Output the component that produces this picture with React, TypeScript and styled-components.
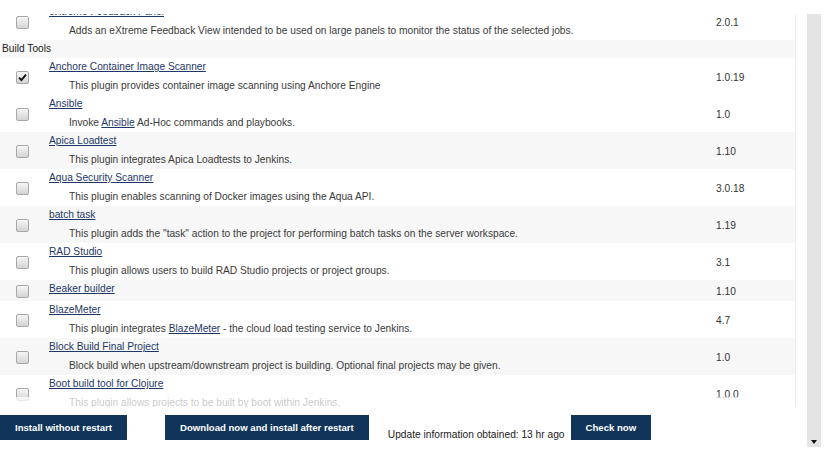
import React, { useLayoutEffect, useRef } from "react";
import styled, { createGlobalStyle } from "styled-components";

const GlobalStyle = createGlobalStyle`
  html, body {
    margin: 0;
    padding: 0;
    background: #ffffff;
    font-family: "Liberation Sans", Arial, sans-serif;
    font-size: 10.2px;
    color: #333333;
  }
`;

type Plugin = {
  name: string;
  version: string;
  desc?: React.ReactNode;
  checked?: boolean;
  shade?: boolean;
};

const Frame = styled.div`
  display: grid;
  grid-template-columns: 807px 14px;
  margin-top: 14px;
  height: 433px;
`;

const Main = styled.div`
  display: flex;
  flex-direction: column;
  min-width: 0;
`;

const Viewport = styled.div`
  position: relative;
  height: 393px;
  overflow: hidden;
  width: 796px;
  border-right: 1px solid #ececec;
  box-sizing: border-box;
`;

const Fade = styled.div`
  position: absolute;
  left: 0;
  right: 0;
  bottom: 0;
  height: 10px;
  background: rgba(255, 255, 255, 0.72);
  pointer-events: none;
`;

const Scroller = styled.div`
  height: 100%;
  overflow: hidden;
`;

const CategoryRow = styled.div`
  height: 18px;
  line-height: 18px;
  padding-left: 2px;
  background: #f7f7f7;
  color: #222222;
`;

const Row = styled.div<{ $shade?: boolean; $single?: boolean }>`
  display: grid;
  grid-template-columns: 44px 1fr 84px;
  align-items: center;
  background: ${(p) => (p.$shade ? "#f7f7f7" : "#ffffff")};
  height: ${(p) => (p.$single ? "21px" : "37px")};
`;

const CheckCell = styled.div`
  display: flex;
  justify-content: center;
`;

const Box = styled.span<{ $checked?: boolean }>`
  position: relative;
  display: block;
  width: 11px;
  height: 11px;
  margin-top: 1px;
  border: 1px solid #a8a8a8;
  border-radius: 2px;
  background: linear-gradient(#f6f6f6, #d4d4d4);
  box-sizing: content-box;
`;

const Details = styled.div`
  align-self: start;
  padding: 1px 0 0 5px;
`;

const Name = styled.a`
  display: block;
  line-height: 16px;
  color: #1d3766;
  text-decoration: underline;
  width: fit-content;
`;

const Desc = styled.div`
  line-height: 20px;
  padding: 1px 0 0 20px;
  color: #3a3a3a;
  white-space: nowrap;
`;

const InlineLink = styled.a`
  color: #1d3766;
  text-decoration: underline;
`;

const Version = styled.div`
  padding: 1px 0 0 5px;
  color: #333333;
`;

const Bar = styled.div`
  display: flex;
  align-items: flex-end;
  height: 25px;
  padding-top: 8px;
  background: #ffffff;
`;

const Button = styled.button<{ $gap?: number }>`
  height: 25px;
  margin-left: ${(p) => p.$gap ?? 0}px;
  padding: 0 15px;
  border: none;
  border-radius: 0;
  background: #10345a;
  color: #ffffff;
  font-family: "Liberation Sans", Arial, sans-serif;
  font-weight: bold;
  font-size: 9.6px;
  cursor: pointer;
`;

const UpdateInfo = styled.span`
  margin-left: 19px;
  margin-right: 6px;
  margin-bottom: -1px;
  line-height: 12px;
  color: #222222;
  font-size: 10.2px;
`;

const Track = styled.div`
  position: relative;
  background: #e4e4e4;
`;

const Arrow = styled.span`
  position: absolute;
  left: 4px;
  bottom: 3px;
  width: 0;
  height: 0;
  border-left: 3.5px solid transparent;
  border-right: 3.5px solid transparent;
  border-top: 4px solid #111111;
`;

const Check = () => (
  <svg width="9" height="9" viewBox="0 0 9 9" style={{ position: "absolute", left: 1, top: 1 }}>
    <path d="M1 4.6 L3.4 7 L8 1.6" fill="none" stroke="#111" strokeWidth="1.9" />
  </svg>
);

const plugins: Plugin[] = [
  {
    name: "Anchore Container Image Scanner",
    version: "1.0.19",
    checked: true,
    desc: "This plugin provides container image scanning using Anchore Engine",
  },
  {
    name: "Ansible",
    version: "1.0",
    desc: (
      <>
        Invoke <InlineLink href="#">Ansible</InlineLink> Ad-Hoc commands and playbooks.
      </>
    ),
  },
  {
    name: "Apica Loadtest",
    version: "1.10",
    shade: true,
    desc: "This plugin integrates Apica Loadtests to Jenkins.",
  },
  {
    name: "Aqua Security Scanner",
    version: "3.0.18",
    desc: "This plugin enables scanning of Docker images using the Aqua API.",
  },
  {
    name: "batch task",
    version: "1.19",
    shade: true,
    desc: 'This plugin adds the "task" action to the project for performing batch tasks on the server workspace.',
  },
  {
    name: "RAD Studio",
    version: "3.1",
    desc: "This plugin allows users to build RAD Studio projects or project groups.",
  },
  { name: "Beaker builder", version: "1.10", shade: true },
  {
    name: "BlazeMeter",
    version: "4.7",
    desc: (
      <>
        This plugin integrates <InlineLink href="#">BlazeMeter</InlineLink> - the cloud load testing
        service to Jenkins.
      </>
    ),
  },
  {
    name: "Block Build Final Project",
    version: "1.0",
    shade: true,
    desc: "Block build when upstream/downstream project is building. Optional final projects may be given.",
  },
  {
    name: "Boot build tool for Clojure",
    version: "1.0.0",
    desc: "This plugin allows projects to be built by boot within Jenkins.",
  },
];

const PluginRow = ({ p }: { p: Plugin }) => (
  <Row $shade={p.shade} $single={!p.desc}>
    <CheckCell>
      <Box $checked={p.checked}>{p.checked ? <Check /> : null}</Box>
    </CheckCell>
    <Details>
      <Name href="#">{p.name}</Name>
      {p.desc ? <Desc>{p.desc}</Desc> : null}
    </Details>
    <Version>{p.version}</Version>
  </Row>
);

export default function App() {
  const scroller = useRef<HTMLDivElement>(null);

  useLayoutEffect(() => {
    if (scroller.current) scroller.current.scrollTop = 11;
  }, []);

  return (
    <>
      <GlobalStyle />
      <Frame>
        <Main>
          <Viewport>
            <Scroller ref={scroller}>
              <PluginRow
                p={{
                  name: "eXtreme Feedback Panel",
                  version: "2.0.1",
                  desc: "Adds an eXtreme Feedback View intended to be used on large panels to monitor the status of the selected jobs.",
                }}
              />
              <CategoryRow>Build Tools</CategoryRow>
              {plugins.map((p) => (
                <PluginRow key={p.name} p={p} />
              ))}
              <div style={{ height: 200 }} />
            </Scroller>
            <Fade />
          </Viewport>
          <Bar>
            <Button>Install without restart</Button>
            <Button $gap={38}>Download now and install after restart</Button>
            <UpdateInfo>Update information obtained: 13 hr ago</UpdateInfo>
            <Button>Check now</Button>
          </Bar>
        </Main>
        <Track>
          <Arrow />
        </Track>
      </Frame>
    </>
  );
}
